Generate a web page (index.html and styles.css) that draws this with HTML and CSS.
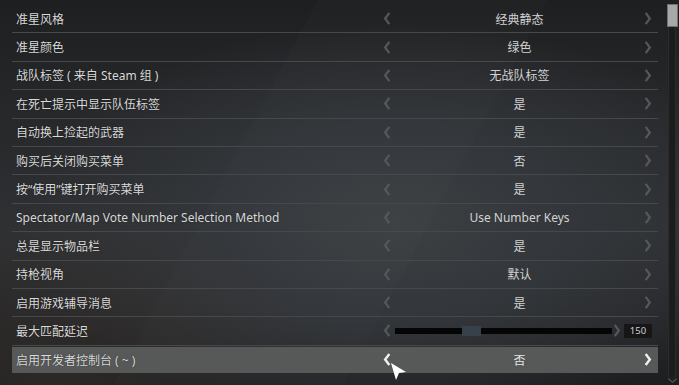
FILE: index.html
```html
<!DOCTYPE html>
<html lang="zh-CN">
<head>
    <meta charset="UTF-8">
    <title>游戏设置</title>
    <link rel="stylesheet" href="styles.css">
</head>
<body>
    <div class="screen">
        <div class="list">
            <div class="row">
                <span class="label">准星风格</span>
                <div class="control">
                    <span class="arrow"><svg viewBox="0 0 8 14"><polyline points="6.5,1 2,7 6.5,13"/></svg></span>
                    <span class="value">经典静态</span>
                    <span class="arrow"><svg viewBox="0 0 8 14"><polyline points="1.5,1 6,7 1.5,13"/></svg></span>
                </div>
            </div>
            <div class="row">
                <span class="label">准星颜色</span>
                <div class="control">
                    <span class="arrow"><svg viewBox="0 0 8 14"><polyline points="6.5,1 2,7 6.5,13"/></svg></span>
                    <span class="value">绿色</span>
                    <span class="arrow"><svg viewBox="0 0 8 14"><polyline points="1.5,1 6,7 1.5,13"/></svg></span>
                </div>
            </div>
            <div class="row">
                <span class="label">战队标签 ( 来自 Steam 组 )</span>
                <div class="control">
                    <span class="arrow"><svg viewBox="0 0 8 14"><polyline points="6.5,1 2,7 6.5,13"/></svg></span>
                    <span class="value">无战队标签</span>
                    <span class="arrow"><svg viewBox="0 0 8 14"><polyline points="1.5,1 6,7 1.5,13"/></svg></span>
                </div>
            </div>
            <div class="row">
                <span class="label">在死亡提示中显示队伍标签</span>
                <div class="control">
                    <span class="arrow"><svg viewBox="0 0 8 14"><polyline points="6.5,1 2,7 6.5,13"/></svg></span>
                    <span class="value">是</span>
                    <span class="arrow"><svg viewBox="0 0 8 14"><polyline points="1.5,1 6,7 1.5,13"/></svg></span>
                </div>
            </div>
            <div class="row">
                <span class="label">自动换上捡起的武器</span>
                <div class="control">
                    <span class="arrow"><svg viewBox="0 0 8 14"><polyline points="6.5,1 2,7 6.5,13"/></svg></span>
                    <span class="value">是</span>
                    <span class="arrow"><svg viewBox="0 0 8 14"><polyline points="1.5,1 6,7 1.5,13"/></svg></span>
                </div>
            </div>
            <div class="row">
                <span class="label">购买后关闭购买菜单</span>
                <div class="control">
                    <span class="arrow"><svg viewBox="0 0 8 14"><polyline points="6.5,1 2,7 6.5,13"/></svg></span>
                    <span class="value">否</span>
                    <span class="arrow"><svg viewBox="0 0 8 14"><polyline points="1.5,1 6,7 1.5,13"/></svg></span>
                </div>
            </div>
            <div class="row">
                <span class="label">按“使用”键打开购买菜单</span>
                <div class="control">
                    <span class="arrow"><svg viewBox="0 0 8 14"><polyline points="6.5,1 2,7 6.5,13"/></svg></span>
                    <span class="value">是</span>
                    <span class="arrow"><svg viewBox="0 0 8 14"><polyline points="1.5,1 6,7 1.5,13"/></svg></span>
                </div>
            </div>
            <div class="row">
                <span class="label">Spectator/Map Vote Number Selection Method</span>
                <div class="control">
                    <span class="arrow"><svg viewBox="0 0 8 14"><polyline points="6.5,1 2,7 6.5,13"/></svg></span>
                    <span class="value">Use Number Keys</span>
                    <span class="arrow"><svg viewBox="0 0 8 14"><polyline points="1.5,1 6,7 1.5,13"/></svg></span>
                </div>
            </div>
            <div class="row">
                <span class="label">总是显示物品栏</span>
                <div class="control">
                    <span class="arrow"><svg viewBox="0 0 8 14"><polyline points="6.5,1 2,7 6.5,13"/></svg></span>
                    <span class="value">是</span>
                    <span class="arrow"><svg viewBox="0 0 8 14"><polyline points="1.5,1 6,7 1.5,13"/></svg></span>
                </div>
            </div>
            <div class="row">
                <span class="label">持枪视角</span>
                <div class="control">
                    <span class="arrow"><svg viewBox="0 0 8 14"><polyline points="6.5,1 2,7 6.5,13"/></svg></span>
                    <span class="value">默认</span>
                    <span class="arrow"><svg viewBox="0 0 8 14"><polyline points="1.5,1 6,7 1.5,13"/></svg></span>
                </div>
            </div>
            <div class="row">
                <span class="label">启用游戏辅导消息</span>
                <div class="control">
                    <span class="arrow"><svg viewBox="0 0 8 14"><polyline points="6.5,1 2,7 6.5,13"/></svg></span>
                    <span class="value">是</span>
                    <span class="arrow"><svg viewBox="0 0 8 14"><polyline points="1.5,1 6,7 1.5,13"/></svg></span>
                </div>
            </div>
            <div class="row">
                <span class="label">最大匹配延迟</span>
                <div class="slider-control">
                    <span class="arrow"><svg viewBox="0 0 8 14"><polyline points="6.5,1 2,7 6.5,13"/></svg></span>
                    <div class="track"><div class="knob"></div></div>
                    <span class="arrow"><svg viewBox="0 0 8 14"><polyline points="1.5,1 6,7 1.5,13"/></svg></span>
                    <span class="slider-value">150</span>
                </div>
            </div>
            <div class="row active">
                <span class="label">启用开发者控制台 ( ~ )</span>
                <div class="control">
                    <span class="arrow"><svg viewBox="0 0 8 14"><polyline points="6.5,1 2,7 6.5,13"/></svg></span>
                    <span class="value">否</span>
                    <span class="arrow"><svg viewBox="0 0 8 14"><polyline points="1.5,1 6,7 1.5,13"/></svg></span>
                </div>
                <svg class="cursor" viewBox="0 0 16 18"><polygon points="0,0 15,9 8,10 5,17"/></svg>
            </div>
        </div>

        <div class="scrollbar">
            <div class="thumb"></div>
            <div class="rail"></div>
            <svg class="down" viewBox="0 0 12 6"><polyline points="1,1 6,5 11,1"/></svg>
        </div>
    </div>
</body>
</html>
```

FILE: styles.css
```css
body {
    margin: 0;
    background: #1b1c1e;
    font-family: "Noto Sans", "Noto Sans CJK SC", sans-serif;
}
.screen {
    width: 679px;
    height: 385px;
    display: flex;
    overflow: hidden;
    background:
        linear-gradient(118deg, transparent 0 36%, rgba(255,255,255,0.012) 36% 62%, transparent 62%),
        radial-gradient(ellipse 260px 200px at 8% 100%, rgba(70,58,48,0.35) 0%, rgba(70,58,48,0) 100%),
        radial-gradient(ellipse 380px 200px at 58% 58%, #3d4043 0%, #33363a 45%, rgba(30,31,33,0) 100%),
        linear-gradient(180deg, #1e1f21 0%, #26282a 30%, #2e3033 60%, #1d1e20 100%);
}
.list {
    width: 646px;
    margin-left: 12px;
    padding-top: 5px;
}
.row {
    position: relative;
    height: 27.4px;
    border-bottom: 1px solid #46484b;
    display: flex;
    align-items: center;
}
.label {
    padding-left: 4px;
    font-size: 12px;
    color: #dadada;
    text-shadow: 0 0 1px rgba(0,0,0,0.6);
}
.control {
    margin-left: auto;
    width: 285px;
    display: grid;
    grid-template-columns: 28px 1fr 20px;
    align-items: center;
}
.arrow {
    display: flex;
    justify-content: center;
}
.arrow svg {
    width: 8px;
    height: 13px;
    fill: none;
    stroke: #55585b;
    stroke-width: 2.4;
}
.value {
    text-align: center;
    font-size: 12px;
    color: #d2d2d2;
}
.slider-control {
    margin-left: auto;
    width: 285px;
    display: flex;
    align-items: center;
}
.slider-control .arrow {
    width: 28px;
}
.slider-control .arrow + .track {
    margin-left: -6px;
}
.track {
    position: relative;
    width: 217px;
    height: 6px;
    background: #050505;
}
.knob {
    position: absolute;
    left: 67px;
    top: -2px;
    width: 19px;
    height: 10px;
    background: #37414c;
}
.slider-control .track + .arrow {
    width: 10px;
}
.slider-value {
    margin-left: 2px;
    width: 28px;
    height: 14px;
    background: #161616;
    color: #cfcfcf;
    font-size: 9.5px;
    line-height: 14px;
    text-align: center;
}
.row.active {
    height: 26px;
    margin-top: 1px;
    border-bottom: none;
    background: #575858;
}
.row.active .arrow svg {
    stroke: #f0f0f0;
    stroke-width: 2.6;
}
.row.active .value {
    color: #e4e4e4;
}
.cursor {
    position: absolute;
    left: 379px;
    top: 16px;
    width: 16px;
    height: 18px;
    fill: #ffffff;
}
.scrollbar {
    position: relative;
    margin-left: 8px;
    width: 12px;
    display: flex;
    flex-direction: column;
    align-items: center;
}
.thumb {
    margin-top: 4px;
    width: 11px;
    height: 23px;
    background: #a8a8a8;
    border: 1px solid #707070;
    box-sizing: border-box;
}
.rail {
    width: 6px;
    height: 350px;
    background: #1c1c1d;
    border-left: 1px solid #2c2c2d;
    border-right: 1px solid #2c2c2d;
}
.down {
    width: 11px;
    height: 5px;
    margin-top: 1px;
    fill: none;
    stroke: #555;
    stroke-width: 1.5;
}
```
